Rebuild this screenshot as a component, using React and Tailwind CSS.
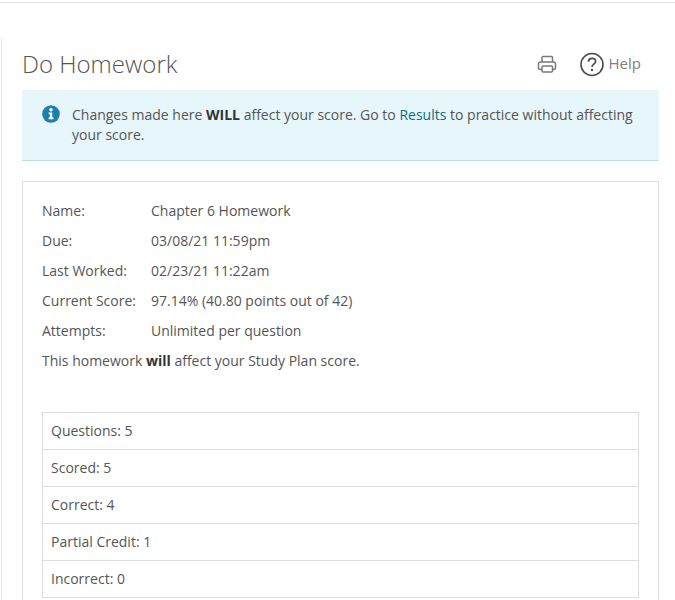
import React from 'react';

const details = [
  ['Name:', 'Chapter 6 Homework'],
  ['Due:', '03/08/21 11:59pm'],
  ['Last Worked:', '02/23/21 11:22am'],
  ['Current Score:', '97.14% (40.80 points out of 42)'],
  ['Attempts:', 'Unlimited per question'],
];

const stats = ['Questions: 5', 'Scored: 5', 'Correct: 4', 'Partial Credit: 1', 'Incorrect: 0'];

const PrinterIcon = () => (
  <svg width="20" height="20" viewBox="0 0 20 20" fill="none" stroke="#7a7a7a" strokeWidth="1.5">
    <rect x="5" y="2.5" width="10.5" height="7" rx="1" />
    <rect x="1.5" y="8" width="17" height="7.5" rx="2" fill="#ffffff" />
    <rect x="5" y="12" width="10.5" height="6" rx="1" fill="#ffffff" />
  </svg>
);

const HelpIcon = () => (
  <svg width="24" height="25" viewBox="0 0 24 25" fill="none">
    <circle cx="12" cy="12.5" r="11" stroke="#4a4a4a" strokeWidth="1.6" />
    <path d="M8.5 9.8c0-2.2 1.6-3.5 3.6-3.5s3.5 1.2 3.5 3.1c0 2.8-3.6 2.8-3.6 5.6" stroke="#4a4a4a" strokeWidth="1.7" />
    <circle cx="12" cy="18" r="1.2" fill="#4a4a4a" />
  </svg>
);

const InfoIcon = () => (
  <svg width="18" height="18" viewBox="0 0 18 18" className="shrink-0">
    <circle cx="9" cy="9" r="8.8" fill="#1d7fb0" />
    <circle cx="9" cy="4.8" r="1.7" fill="#ffffff" />
    <path d="M6.6 7.4h3.7v5.2h1.2v1.6H6.6v-1.6h1.2V9H6.6z" fill="#ffffff" />
  </svg>
);

export default function App() {
  return (
    <div className="bg-white h-[600px] overflow-hidden font-['Open_Sans',sans-serif] text-sm text-[#555555]">
      <div className="mt-0.5 h-px bg-[#e2e2e2]" />
      <div className="mt-[35px] ml-px border-l border-[#e6e6e6] h-[600px] pl-5 pr-4">
        <div className="flex items-center justify-between h-[52px]">
          <h1 className="text-2xl font-light text-[#555555] leading-8">Do Homework</h1>
          <div className="flex items-center mr-[18px]">
            <PrinterIcon />
            <div className="ml-[23px] flex items-center gap-[5px] text-[15px] text-[#808080]">
              <HelpIcon />
              <span>Help</span>
            </div>
          </div>
        </div>
        <div className="flex gap-3 h-[71px] pt-[15px] pl-5 pr-5 bg-[#e6f6fb] border-b border-[#b9dfe9] leading-5">
          <InfoIcon />
          <p>
            Changes made here <b className="font-bold text-[#333333]">WILL</b> affect your score. Go to{' '}
            <a className="text-[#0b6b82]">Results</a> to practice without affecting your score.
          </p>
        </div>
        <div className="mt-5 border border-[#dddddd] px-[19px] pt-[14px] h-[600px]">
          <div className="flex flex-col">
            {details.map(([label, value]) => (
              <div key={label} className="flex h-[30px] items-center">
                <span className="w-[109px]">{label}</span>
                <span>{value}</span>
              </div>
            ))}
            <p className="h-[30px] leading-[30px]">
              This homework <b className="font-bold text-[#333333]">will</b> affect your Study Plan score.
            </p>
          </div>
          <div className="mt-9 border border-[#dddddd] divide-y divide-[#dddddd]">
            {stats.map((s) => (
              <div key={s} className="h-[37px] last:h-9 flex items-center px-2">{s}</div>
            ))}
          </div>
        </div>
      </div>
    </div>
  );
}
